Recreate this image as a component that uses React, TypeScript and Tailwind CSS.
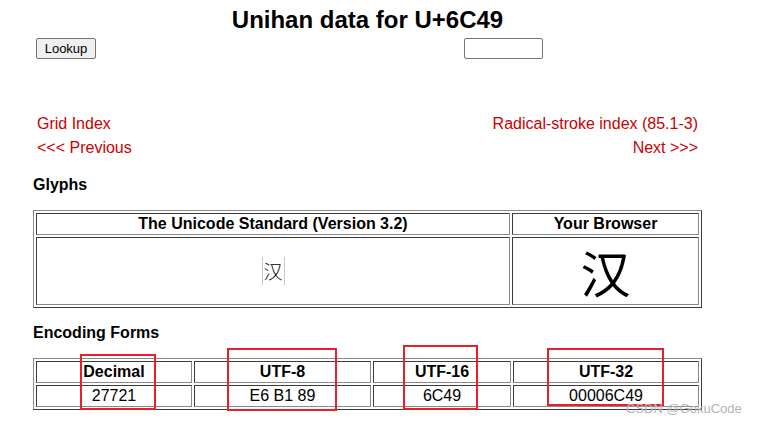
const outer = "border-separate border-spacing-[2px] border border-solid border-t-[#8a8a8a] border-l-[#8a8a8a] border-r-[#3c3c3c] border-b-[#3c3c3c]";
const cell = "border border-solid border-t-[#3c3c3c] border-l-[#3c3c3c] border-r-[#8a8a8a] border-b-[#8a8a8a] p-0 text-center align-middle";

const App = () => {
    const encodings = [
        { name: "Decimal", value: "27721", w: "w-[156px]" },
        { name: "UTF-8", value: "E6 B1 89", w: "w-[177px]" },
        { name: "UTF-16", value: "6C49", w: "w-[138px]" },
        { name: "UTF-32", value: "00006C49", w: "w-[186px]" },
    ];

    return (
        <div className="relative w-[757px] h-[424px] overflow-hidden bg-white text-black font-['Liberation_Sans',Arial,sans-serif]">
            <h1 className="w-[735px] pt-[6px] text-center text-[24px] leading-[28px] font-bold">Unihan data for U+6C49</h1>

            <div className="flex items-start mt-[4px] ml-[36px]">
                <button className="w-[60px] h-[21px] rounded-[2px] border border-[#767676] bg-[#efefef] text-[13px] leading-[17px]">Lookup</button>
                <input className="ml-[368px] w-[79px] h-[21px] rounded-[2px] border border-[#767676] bg-white" type="text" />
            </div>

            <div className="ml-[37px] w-[661px] mt-[53px] text-[16px] leading-[24px] text-[#cc0000]">
                <div className="flex justify-between">
                    <span>Grid Index</span>
                    <span>Radical-stroke index (85.1-3)</span>
                </div>
                <div className="flex justify-between">
                    <span>&lt;&lt;&lt; Previous</span>
                    <span>Next &gt;&gt;&gt;</span>
                </div>
            </div>

            <div className="ml-[33px]">
                <h3 className="mt-[15px] text-[16px] leading-[20px] font-bold">Glyphs</h3>
                <table className={"mt-[15px] w-[669px] " + outer}>
                    <tbody>
                        <tr>
                            <th className={cell + " w-[474px] h-[22px] text-[16px] leading-[20px] font-bold"}>The Unicode Standard (Version 3.2)</th>
                            <th className={cell + " w-[187px] h-[22px] text-[16px] leading-[20px] font-bold"}>Your Browser</th>
                        </tr>
                        <tr>
                            <td className={cell + " h-[68px]"}>
                                <span className="inline-flex w-[23px] h-[28px] items-center justify-center border-x border-[#c8c8c8] text-[19px] leading-[28px] font-['Noto_Sans_CJK_SC',sans-serif] font-light">汉</span>
                            </td>
                            <td className={cell + " h-[68px] text-[50px] leading-[60px] font-['Noto_Sans_CJK_SC',sans-serif]"}>汉</td>
                        </tr>
                    </tbody>
                </table>

                <h3 className="mt-[15px] text-[16px] leading-[20px] font-bold">Encoding Forms</h3>
                <table className={"mt-[15px] w-[669px] " + outer}>
                    <tbody>
                        <tr>
                            {encodings.map((e) => (
                                <th key={e.name} className={cell + " h-[22px] text-[16px] leading-[20px] font-bold " + e.w}>{e.name}</th>
                            ))}
                        </tr>
                        <tr>
                            {encodings.map((e) => (
                                <td key={e.name} className={cell + " h-[22px] text-[16px] leading-[20px]"}>{e.value}</td>
                            ))}
                        </tr>
                    </tbody>
                </table>
            </div>

            {/* red annotation boxes */}
            <div className="absolute left-[80px] top-[354px] w-[76px] h-[56px] border-2 border-[#e8202a]"></div>
            <div className="absolute left-[227px] top-[348px] w-[110px] h-[63px] border-2 border-[#e8202a]"></div>
            <div className="absolute left-[403px] top-[345px] w-[75px] h-[65px] border-2 border-[#e8202a]"></div>
            <div className="absolute left-[547px] top-[348px] w-[117px] h-[58px] border-2 border-[#e8202a]"></div>

            <span className="absolute left-[626px] top-[401px] text-[13px] leading-[16px] text-[#b4b4b4]">CSDN @GokuCode</span>
        </div>
    );
}

export default App;
